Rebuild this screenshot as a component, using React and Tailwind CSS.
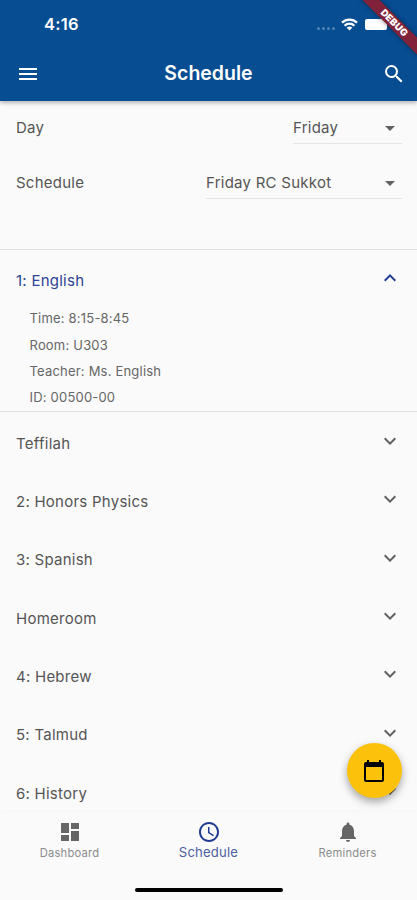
import { useState } from "react";
import {
  MdMenu,
  MdSearch,
  MdArrowDropDown,
  MdExpandMore,
  MdExpandLess,
  MdDashboard,
  MdAccessTime,
  MdNotifications,
  MdCalendarToday,
} from "react-icons/md";

const periods = [
  {
    name: "1: English",
    details: ["Time: 8:15-8:45", "Room: U303", "Teacher: Ms. English", "ID: 00500-00"],
  },
  { name: "Teffilah" },
  { name: "2: Honors Physics" },
  { name: "3: Spanish" },
  { name: "Homeroom" },
  { name: "4: Hebrew" },
  { name: "5: Talmud" },
  { name: "6: History" },
];

function StatusBar() {
  return (
    <div className="flex h-[47px] items-center justify-between pt-[2px] pl-[44px] pr-[30px]">
      <span className="text-[16.5px] font-semibold">4:16</span>
      <div className="flex items-center">
        <div className="mt-[8px] mr-[6px] flex gap-[2px]">
          <span className="size-[3px] rounded-full bg-white/30" />
          <span className="size-[3px] rounded-full bg-white/30" />
          <span className="size-[3px] rounded-full bg-white/30" />
          <span className="size-[3px] rounded-full bg-white/30" />
        </div>
        <svg width="17" height="13" viewBox="0 0 17 13" fill="none" stroke="#fff" strokeWidth="2.3">
          <path d="M1 4.6a10.8 10.8 0 0 1 15 0" />
          <path d="M3.6 7.7a7 7 0 0 1 9.8 0" />
          <path d="M8.5 12.5 5.7 9.8a3.9 3.9 0 0 1 5.6 0z" fill="#fff" stroke="none" />
        </svg>
        <span className="ml-[7px] h-[11px] w-[22px] rounded-[2px] bg-white" />
      </div>
    </div>
  );
}

function Header() {
  return (
    <header className="relative z-10 h-[101px] shrink-0 overflow-visible bg-[#074d92] text-white shadow-[0_2px_4px_rgba(0,0,0,0.28)]">
      <StatusBar />
      <div className="flex h-[54px] items-center justify-between pl-4 pr-[11px]">
        <MdMenu className="size-6" />
        <h1 className="pr-[5px] text-[19.5px] font-semibold tracking-[0px]">Schedule</h1>
        <MdSearch className="size-6" />
      </div>
      {/* debug ribbon */}
      <div className="absolute top-0 right-0 size-[60px] overflow-hidden">
        <div className="absolute top-[17px] left-[-3px] flex h-[12px] w-[80px] rotate-45 items-center justify-center bg-[#82213a] text-[9.6px] font-black tracking-[0.1px] shadow-[0_0_5px_rgba(0,0,0,0.45)]">
          DEBUG
        </div>
      </div>
    </header>
  );
}

function Picker({ label, value, width }) {
  return (
    <div className="flex items-center justify-between">
      <span>{label}</span>
      <div className={`flex h-[31px] items-center justify-between border-b border-[#e4e4e4] ${width}`}>
        <span>{value}</span>
        <MdArrowDropDown className="size-6 text-[#616161]" />
      </div>
    </div>
  );
}

function Period({ period, open, onToggle }) {
  const Icon = open ? MdExpandLess : MdExpandMore;
  return (
    <div className={open ? "mb-[3px] border-y border-[#dedede] pt-[2px]" : ""}>
      <button
        onClick={onToggle}
        className={`flex h-[58.4px] w-full items-center justify-between pl-4 pr-[15px] ${open ? "text-[#2d4494]" : ""}`}
      >
        <span>{period.name}</span>
        <Icon className={`mb-[6px] size-6 ${open ? "text-[#1f3c93]" : "text-[#616161]"}`} />
      </button>
      {open && period.details && (
        <div className="-mt-[5px] pl-[29.5px] text-[13px] leading-[26.3px] tracking-[0.2px] text-[#666]">
          {period.details.map((line) => (
            <p key={line}>{line}</p>
          ))}
        </div>
      )}
    </div>
  );
}

function NavItem({ icon: Icon, label, active }) {
  return (
    <button className={`flex flex-1 flex-col items-center ${active ? "text-[#1f3c93]" : "text-[#666]"}`}>
      <Icon className="size-6" />
      {active ? (
        <span className="text-[13.1px] leading-4 tracking-[0.2px] text-[#4c60a3]">{label}</span>
      ) : (
        <span className="mt-px text-[11.2px] leading-4 tracking-[0.2px] text-[#8c8c8c]">{label}</span>
      )}
    </button>
  );
}

function App() {
  const [openIndex, setOpenIndex] = useState(0);

  return (
    <div className="relative flex h-[900px] w-[417px] flex-col overflow-hidden bg-[#fafafa] font-['Inter',sans-serif] text-[15px] tracking-[0.25px] text-[#555]">
      <Header />
      <main className="min-h-0 flex-1 overflow-hidden">
        <div className="flex h-[148px] flex-col gap-[24px] pt-[12px] pl-4 pr-[15px]">
          <Picker label="Day" value="Friday" width="w-[109px]" />
          <Picker label="Schedule" value="Friday RC Sukkot" width="w-[196px]" />
        </div>
        {periods.map((period, i) => (
          <Period
            key={period.name}
            period={period}
            open={openIndex === i}
            onToggle={() => setOpenIndex(openIndex === i ? -1 : i)}
          />
        ))}
      </main>

      {/* floating calendar button */}
      <button className="absolute right-[15px] bottom-[102px] z-20 flex size-[55px] items-center justify-center rounded-full bg-[#fcc20b] pr-px text-black shadow-[0_4px_8px_rgba(0,0,0,0.35)]">
        <MdCalendarToday className="size-6" />
      </button>

      <nav className="z-10 h-[88px] shrink-0 bg-[#fafafa] pt-2 shadow-[0_-1px_3px_rgba(0,0,0,0.02)]">
        <div className="flex">
          <NavItem icon={MdDashboard} label="Dashboard" />
          <NavItem icon={MdAccessTime} label="Schedule" active />
          <NavItem icon={MdNotifications} label="Reminders" />
        </div>
        <div className="mx-auto mt-[27px] h-[4px] w-[148px] rounded-full bg-black" />
      </nav>
    </div>
  );
}

export default App;
